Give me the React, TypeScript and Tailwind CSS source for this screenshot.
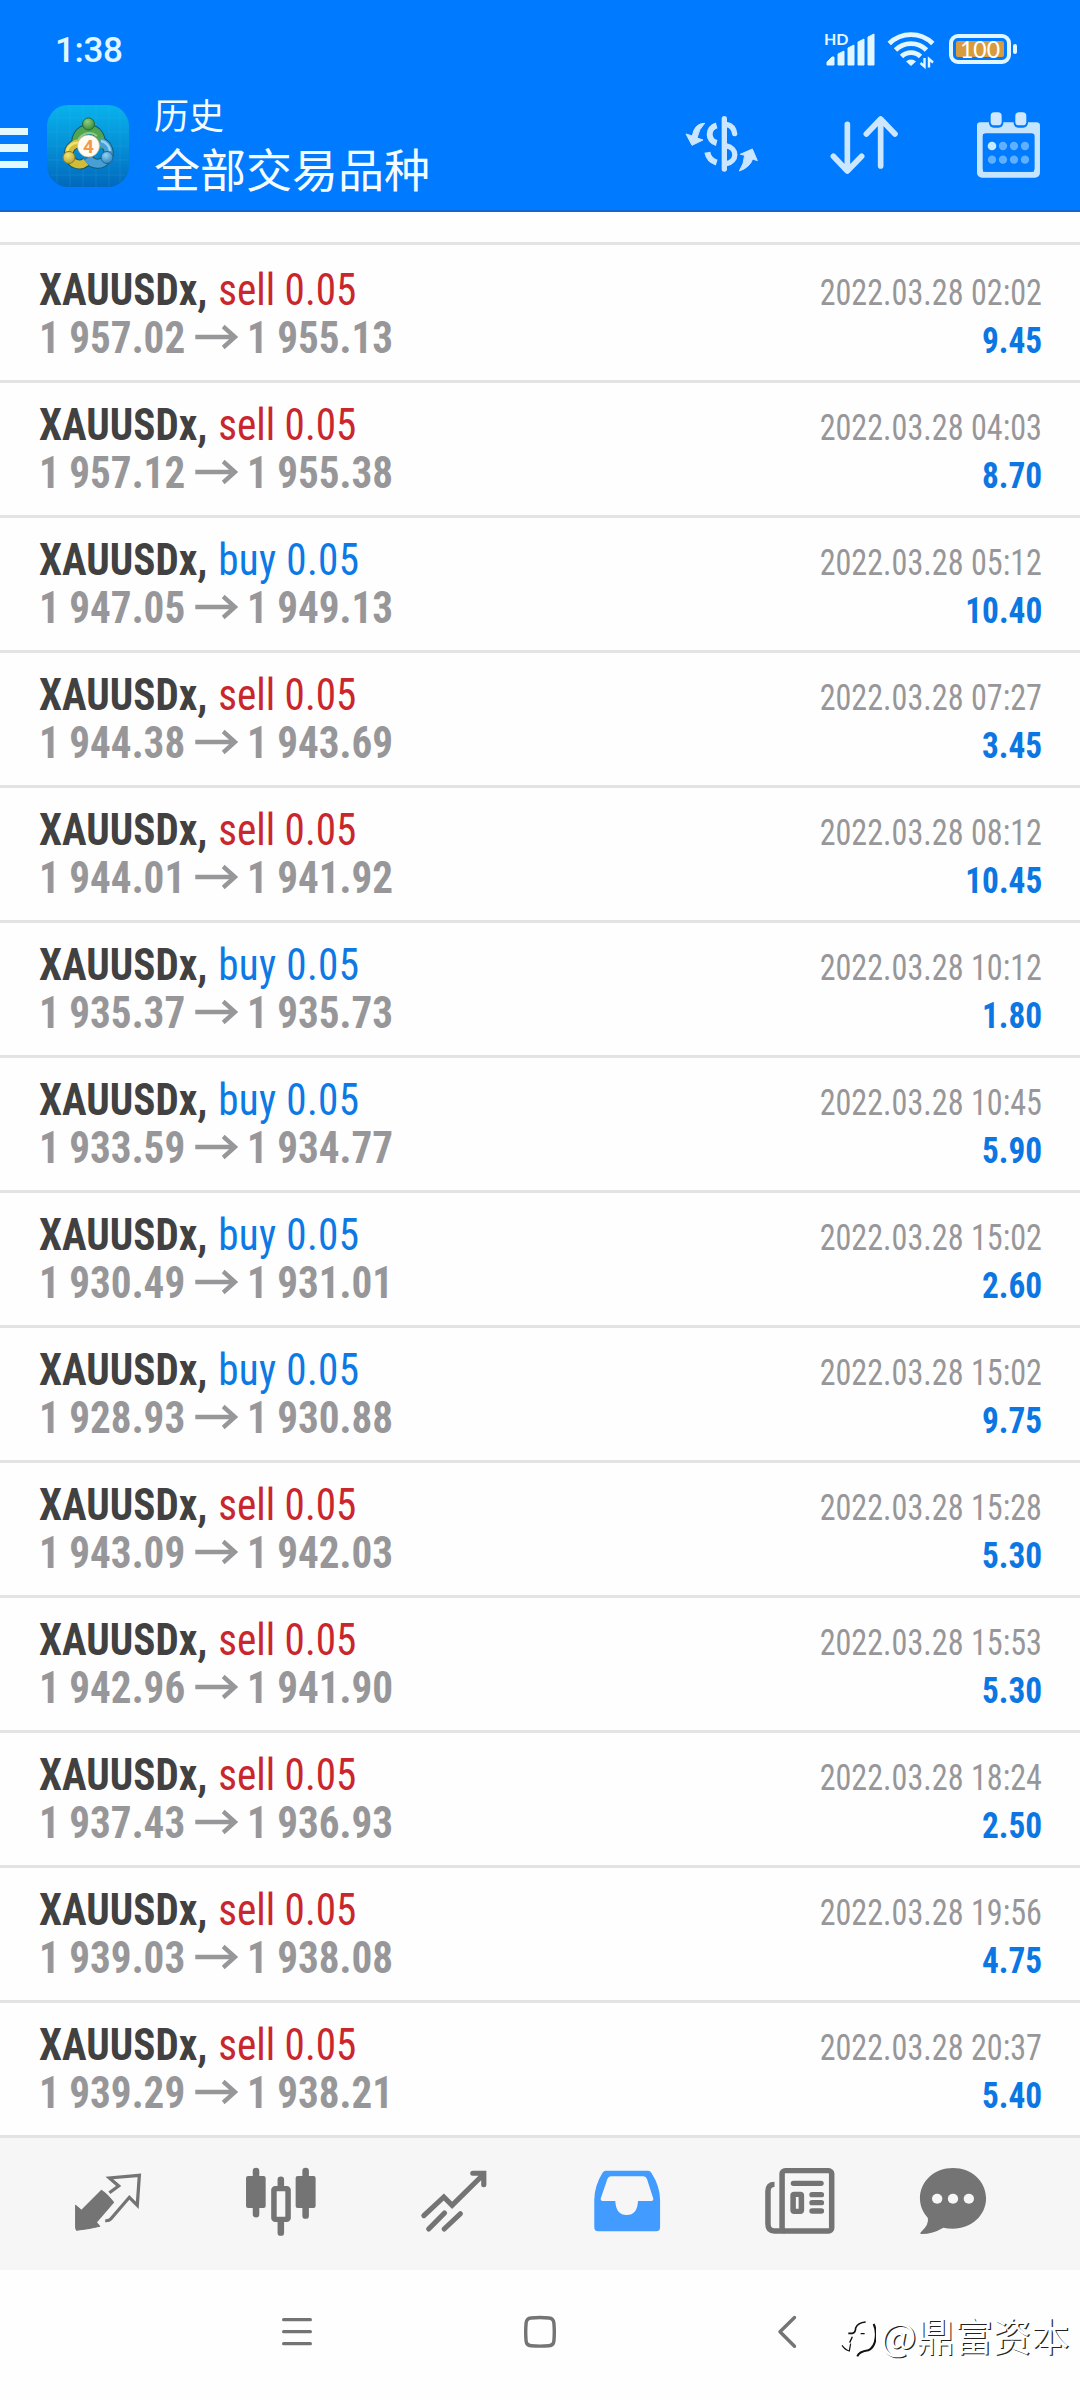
import React from 'react';

type Side = 'buy' | 'sell';

type Deal = {
  side: Side;
  open: string;
  close: string;
  time: string;
  profit: string;
};

const deals: Deal[] = [
  { side: 'sell', open: '1 957.02', close: '1 955.13', time: '2022.03.28 02:02', profit: '9.45' },
  { side: 'sell', open: '1 957.12', close: '1 955.38', time: '2022.03.28 04:03', profit: '8.70' },
  { side: 'buy', open: '1 947.05', close: '1 949.13', time: '2022.03.28 05:12', profit: '10.40' },
  { side: 'sell', open: '1 944.38', close: '1 943.69', time: '2022.03.28 07:27', profit: '3.45' },
  { side: 'sell', open: '1 944.01', close: '1 941.92', time: '2022.03.28 08:12', profit: '10.45' },
  { side: 'buy', open: '1 935.37', close: '1 935.73', time: '2022.03.28 10:12', profit: '1.80' },
  { side: 'buy', open: '1 933.59', close: '1 934.77', time: '2022.03.28 10:45', profit: '5.90' },
  { side: 'buy', open: '1 930.49', close: '1 931.01', time: '2022.03.28 15:02', profit: '2.60' },
  { side: 'buy', open: '1 928.93', close: '1 930.88', time: '2022.03.28 15:02', profit: '9.75' },
  { side: 'sell', open: '1 943.09', close: '1 942.03', time: '2022.03.28 15:28', profit: '5.30' },
  { side: 'sell', open: '1 942.96', close: '1 941.90', time: '2022.03.28 15:53', profit: '5.30' },
  { side: 'sell', open: '1 937.43', close: '1 936.93', time: '2022.03.28 18:24', profit: '2.50' },
  { side: 'sell', open: '1 939.03', close: '1 938.08', time: '2022.03.28 19:56', profit: '4.75' },
  { side: 'sell', open: '1 939.29', close: '1 938.21', time: '2022.03.28 20:37', profit: '5.40' },
];

const StatusBar = () => (
  <div className="flex h-[98px] items-start justify-between pl-[55px] pr-[63px] text-[#e2f6ff]">
    <span className="mt-[30px] font-['Roboto',sans-serif] text-[35px] font-medium leading-[42px] tracking-[-0.3px]">1:38</span>
    <div className="mt-[30px] flex">
      {/* Signal */}
      <div className="relative mr-[12px] h-[40px] w-[51px]">
        <span className="absolute left-0 top-[1px] font-['Lato',sans-serif] text-[16px] font-bold leading-[16px]">HD</span>
        <svg viewBox="0 0 51 40" className="h-[40px] w-[51px]" fill="currentColor">
          <path d="M3 35v-3l5-5h2v8zM14 35V24l6-3v14zM24 35V18l6-3v20zM34 35V12l6-3v26zM44 35V7l6-3v31z" stroke="currentColor" strokeWidth="1" strokeLinejoin="round" />
        </svg>
      </div>
      {/* Wi-Fi */}
      <svg viewBox="0 0 48 40" className="mr-[14px] h-[40px] w-[48px]" fill="none" stroke="currentColor" strokeWidth="4.8">
        <path d="M2.200 13.500A31 31 0 0 1 45.800 13.500" />
        <path d="M8.500 20A22 22 0 0 1 39.500 20" />
        <path d="M14.500 26.500A13.500 13.500 0 0 1 33.500 26.500" />
        <path d="M19 31.500a7 7 0 0 1 10 0l-5 4.500z" fill="currentColor" stroke="none" />
        <path d="M37.500 28v8.500l-4-3.500M42 37.500V29l4 3.500" strokeWidth="2.400" />
      </svg>
      {/* Battery */}
      <div className="relative mt-[4px] flex h-[30px] items-center">
        <div className="h-[30px] w-[62px] rounded-[9px] border-[4px] border-[#e2f6ff] p-[3px]">
          <div className="flex h-full items-center justify-center rounded-[2px] bg-[#d99b3f] font-['Lato',sans-serif] text-[23px] leading-[16px] text-white">100</div>
        </div>
        <div className="ml-[2px] h-[10px] w-[4px] rounded-[2px] bg-[#e2f6ff]" />
      </div>
    </div>
  </div>
);

const AppLogo = () => (
  <svg viewBox="0 0 82 82" className="h-[82px] w-[82px]">
    <defs>
      <linearGradient id="tile" x1="0" y1="0" x2="0" y2="1">
        <stop offset="0" stopColor="#08b2ec" />
        <stop offset=".5" stopColor="#0590d6" />
        <stop offset="1" stopColor="#0268bd" />
      </linearGradient>
      <radialGradient id="green" cx=".4" cy=".3" r=".8">
        <stop offset="0" stopColor="#8fd07c" />
        <stop offset="1" stopColor="#2d8236" />
      </radialGradient>
      <radialGradient id="yellow" cx=".4" cy=".3" r=".8">
        <stop offset="0" stopColor="#f3e676" />
        <stop offset="1" stopColor="#b3992a" />
      </radialGradient>
      <radialGradient id="blue" cx=".4" cy=".3" r=".8">
        <stop offset="0" stopColor="#8fd4f5" />
        <stop offset="1" stopColor="#2479b5" />
      </radialGradient>
    </defs>
    <rect width="82" height="82" rx="21" fill="url(#tile)" />
    <path d="M10 4v74M23 1v80M36 0v82M49 0v82M62 1v80M73 5v72M4 13h74M1 27h80M0 41h82M1 55h80M4 70h74" stroke="#4cc0f2" strokeOpacity=".2" strokeWidth=".8" />
    <g fill="none" stroke="#155a6c" strokeWidth="10">
      <path d="M31 42A12 12 0 1 1 52 42" />
      <path d="M36 39A10.500 10.500 0 1 0 39 57" />
      <path d="M53 37A11 11 0 1 1 41 53" />
    </g>
    <path d="M31 42A12 12 0 1 1 52 42" fill="none" stroke="#4fa552" strokeWidth="8" />
    <path d="M31 36A12 12 0 0 1 50 31" fill="none" stroke="#8fcb83" strokeWidth="2" />
    <path d="M36 39A10.500 10.500 0 1 0 39 57" fill="none" stroke="#d3bd38" strokeWidth="8" />
    <path d="M32 38A10.500 10.500 0 0 0 20 46" fill="none" stroke="#f0e36c" strokeWidth="2.500" />
    <path d="M53 37A11 11 0 1 1 41 53" fill="none" stroke="#489fd6" strokeWidth="8" />
    <path d="M54 36A11 11 0 0 1 63 46" fill="none" stroke="#93d3f5" strokeWidth="2.500" />
    <g strokeWidth="1">
      <circle cx="41.500" cy="19" r="6" fill="url(#green)" stroke="#1f6b35" />
      <circle cx="22" cy="52.500" r="6" fill="url(#yellow)" stroke="#8c7b1f" />
      <circle cx="60" cy="52.500" r="6" fill="url(#blue)" stroke="#1b6598" />
    </g>
    <circle cx="41.500" cy="41" r="11" fill="#fffaf2" stroke="#c9b68c" strokeWidth=".6" />
    <text x="41.500" y="48" textAnchor="middle" fontFamily="Roboto, sans-serif" fontWeight="700" fontSize="19" fill="#f09a4e">4</text>
  </svg>
);

const Header = () => (
  <header className="h-[212px] border-b-2 border-[#1565d0] bg-[#007aff]">
    <StatusBar />
    <div className="flex">
      <div className="mt-[29.500px] flex w-[28px] flex-col gap-[9px]">
        <div className="h-[7.600px] bg-[#e2f8ff]" />
        <div className="h-[7.600px] bg-[#e2f8ff]" />
        <div className="h-[7.600px] bg-[#e2f8ff]" />
      </div>
      <div className="ml-[19px] mt-[7px]">
        <AppLogo />
      </div>
      <div className="ml-[25px] w-[500px] font-['Noto_Sans_CJK_SC',sans-serif] text-[#f4fcff]">
        <div className="-mt-[8px] text-[35px] leading-[48px]">历史</div>
        <div className="-mt-px text-[46px] leading-[60px]">全部交易品种</div>
      </div>
      {/* Currency */}
      <svg viewBox="130 340 240 190" className="ml-[29px] mt-[15px] h-[63.300px] w-[80px]" fill="none" stroke="#cbe6ff" strokeWidth="16">
        <path d="M254 357v151" strokeLinecap="round" />
        <path d="M231 377c-28 8-28 46 0 53M203 458c3 16 12 26 28 31" strokeWidth="18" />
        <path d="M262 375c15 3 21 12 23 27" strokeLinecap="round" />
        <path d="M260 439c34 6 34 46 0 53" />
        <g fill="#cbe6ff" stroke="#cbe6ff" strokeWidth="3" strokeLinejoin="round">
          <path d="M195 371q-31 0-37 38l-19-6 18 34 33-16-18-6q6-28 23-44z" />
          <path d="M299 514q14-21 16-47l-13-3 36-16 15 35-14-5q-9 26-40 36z" />
        </g>
      </svg>
      {/* Sort */}
      <svg viewBox="570 340 210 190" className="ml-[66px] mt-[15px] h-[63.300px] w-[70px]" fill="none" stroke="#cbe6ff" strokeWidth="17" strokeLinecap="round" strokeLinejoin="round">
        <path d="M625 374v138M583 470l42 44 43-44M725 499V359M682 403l43-45 43 45" />
      </svg>
      {/* Calendar */}
      <svg viewBox="1008 332 196 204" className="ml-[77px] mt-[12.500px] h-[68px] w-[65.300px]">
        <rect x="1020" y="383" width="171" height="140" rx="6" fill="none" stroke="#c5e5ff" strokeWidth="18" />
        <path d="M1011 401v-25q0-10 10-10h168q11 0 11 10v25z" fill="#c5e5ff" />
        <rect x="1028" y="399" width="156" height="115" rx="10" fill="#007aff" />
        <rect x="1047" y="332" width="43" height="50" rx="14" fill="#007aff" />
        <rect x="1121" y="332" width="43" height="50" rx="14" fill="#007aff" />
        <rect x="1052" y="336" width="33" height="39" rx="11" fill="#cfe8ff" />
        <rect x="1126" y="336" width="33" height="39" rx="11" fill="#cfe8ff" />
        <g fill="#5fb0ff">
          <circle cx="1056" cy="437" r="13" fill="#c5ecff" />
          <circle cx="1089" cy="437" r="12.500" />
          <circle cx="1122" cy="437" r="12.500" />
          <circle cx="1155" cy="437" r="12.500" />
          <circle cx="1056" cy="478" r="12.500" />
          <circle cx="1089" cy="478" r="12.500" />
          <circle cx="1122" cy="478" r="12.500" />
          <circle cx="1155" cy="478" r="12.500" />
        </g>
      </svg>
    </div>
  </header>
);

const DealRow = ({ deal }: { deal: Deal }) => (
  <div className="flex h-[135px] justify-between border-b-[3px] border-[#e3e3e4] pl-[39px] pr-[38px] font-['Roboto_Condensed',sans-serif]">
    <div className="origin-left scale-x-[0.935] pt-[18px] text-[44px] leading-[48px]">
      <div>
        <span className="mr-[1.5px] font-bold text-[#414141]">XAUUSDx, </span>
        <span className={deal.side === 'sell' ? 'font-[440] text-[#c9262d]' : 'font-[440] tracking-[0.35px] text-[#0c79e4]'}>{deal.side} 0.05</span>
      </div>
      <div className="flex font-bold text-[#97979a]">
        <span>{deal.open}</span>
        <svg viewBox="0 0 46 26" className="ml-[11px] mr-[9px] mt-[10px] h-[26px] w-[46px]" fill="none" stroke="currentColor" strokeWidth="4.600">
          <path d="M0 13h43M30 2.500l12.500 10.500-12.500 10.500" />
        </svg>
        <span>{deal.close}</span>
      </div>
    </div>
    <div className="flex flex-col items-end pt-[21px] text-[36px] leading-[48px]">
      <div className="origin-right scale-x-[0.893] font-[430] text-[#97979a]">{deal.time}</div>
      <div className="origin-right scale-x-[0.925] font-bold text-[#0c76e2]">{deal.profit}</div>
    </div>
  </div>
);

const TabBar = () => (
  <nav className="flex h-[132px] bg-[#f6f6f6] pl-[21px] pt-[28px] text-[#747474]">
    <div className="flex w-[173px] justify-center">
      <svg viewBox="210.5 168 209 216" preserveAspectRatio="none" className="h-[72px] w-[72px]">
        <path d="M221 286l17 15 58-60q18 12 35 36l-50 60 10 12q-30 8-67 12-3-4-3-10z" fill="currentColor" stroke="currentColor" strokeWidth="3" strokeLinejoin="round" />
        <path d="M319 248l27-20-27-24 87-8-6 90-23-24-54 65q-5 6-16 5" fill="none" stroke="currentColor" strokeWidth="9.500" />
      </svg>
    </div>
    <div className="flex w-[173px] justify-center">
      <svg viewBox="712 168 209 216" preserveAspectRatio="none" className="h-[72px] w-[72px]" stroke="currentColor" fill="none">
        <path d="M744 183v130M888 183v134M816 209v25M816 335v33" strokeWidth="19" strokeLinecap="round" />
        <rect x="715" y="198" width="57" height="96" rx="6" fill="currentColor" stroke="none" />
        <rect x="859" y="198" width="58" height="96" rx="6" fill="currentColor" stroke="none" />
        <rect x="796" y="236" width="41" height="92" rx="4" strokeWidth="16" fill="#f6f6f6" />
      </svg>
    </div>
    <div className="flex w-[173px] justify-center">
      <svg viewBox="1214 168 209 216" preserveAspectRatio="none" className="h-[72px] w-[72px]" stroke="currentColor" fill="none" strokeWidth="15" strokeLinecap="round">
        <path d="M1231 317l58-56 24 25 90-92M1373 190h32v34M1245 357l46-48M1290 357l47-46" />
      </svg>
    </div>
    <div className="flex w-[173px] justify-center">
      <svg viewBox="149.5 168 209 216" preserveAspectRatio="none" className="h-[72px] w-[72px]">
        <path fillRule="evenodd" fill="#429bff" d="M192 182h123q6 0 10 7 25 40 25 81v82q0 12-11 12H170q-11 0-11-12v-82q0-42 24-82 4-6 9-6zM207 199q-7 0-10 8l-19 58q-2 8 6 8h36q2 42 33 42t33-42h38q8 0 6-8l-18-58q-3-8-10-8z" />
      </svg>
    </div>
    <div className="flex w-[173px] justify-center">
      <svg viewBox="653.5 168 209 216" preserveAspectRatio="none" className="h-[72px] w-[72px]" stroke="currentColor" fill="none" strokeWidth="16">
        <rect x="706" y="182" width="144" height="181" rx="9" />
        <path d="M684 223q-19 0-19 21v98q0 21 19 21h30" />
        <path d="M739 220h80M793 254h27M793 278h27M793 303h27" strokeLinecap="round" />
        <rect x="738" y="253" width="24" height="51" rx="3" />
      </svg>
    </div>
    <div className="flex w-[134px] justify-center">
      <svg viewBox="1094.5 168 209 216" preserveAspectRatio="none" className="h-[72px] w-[72px]" fill="currentColor">
        <path d="M1199 174c54 0 96 40 96 91s-42 91-96 91q-15 0-28-3-31 19-63 19-8-1-1-7 23-22 19-41c-14-16-23-36-23-59 0-51 42-91 96-91z" />
        <circle cx="1153" cy="266" r="15" fill="#f6f6f6" />
        <circle cx="1199" cy="266" r="15" fill="#f6f6f6" />
        <circle cx="1245" cy="266" r="15" fill="#f6f6f6" />
      </svg>
    </div>
  </nav>
);

const SystemNav = () => (
  <div className="flex h-[130px] items-start bg-[#fefefe] pt-[44px] text-[#747474]">
    <svg viewBox="0 0 30 36" className="ml-[282px] h-[36px] w-[30px]" stroke="currentColor" strokeWidth="3.200" strokeLinecap="round">
      <path d="M1.600 5.700h26.800M1.600 17.700h26.800M1.600 29.700h26.800" />
    </svg>
    <svg viewBox="0 0 32 36" className="ml-[212px] h-[36px] w-[32px]" fill="none" stroke="currentColor" strokeWidth="3.400">
      <path d="M7 4q9-1 18 0 4.500.4 4.900 5 .8 9 0 18-.4 4.300-4.900 4.700-9 .9-18 0-4.500-.4-4.900-4.700-.8-9 0-18 .4-4.600 4.900-5z" />
    </svg>
    <svg viewBox="0 0 20 36" className="ml-[221px] h-[36px] w-[20px]" fill="none" stroke="currentColor" strokeWidth="3.400" strokeLinecap="round" strokeLinejoin="round">
      <path d="M17.500 3.500L3 17.700l14.500 14.500" />
    </svg>
  </div>
);

const Watermark = () => (
  <div className="absolute bottom-[37px] left-[841px] flex items-center">
    <svg viewBox="33 75 106 115" className="mt-[7px] h-[38.300px] w-[35.300px]" fill="none" stroke="#111">
      <path d="M55 118h12q10-2 10-16 6-16 30-18" strokeWidth="5" />
      <path d="M67 128l-8 18M92 119h12" strokeWidth="4" />
      <path d="M36 154q10 14 22 17l4-22" strokeWidth="3.500" />
      <path d="M131 90q9 18 6 42-3 28-22 37-28 4-33 18" strokeWidth="6" />
    </svg>
    <span className="ml-[4px] whitespace-nowrap font-['Noto_Sans_CJK_SC',sans-serif] text-[38.200px] leading-[56px] text-white [text-shadow:1.2px_1.2px_0_#222]">@鼎富资本</span>
  </div>
);

const App: React.FC = () => {
  return (
    <div className="relative flex h-[2400px] w-[1080px] flex-col overflow-hidden bg-[#fefefe]">
      <Header />
      <div className="h-[33px] border-b-[3px] border-[#e3e3e4]" />
      <main className="pt-[3px]">
        {deals.map((deal) => (
          <DealRow key={deal.time + deal.open} deal={deal} />
        ))}
      </main>
      <TabBar />
      <SystemNav />
      <Watermark />
    </div>
  );
};

export default App;
